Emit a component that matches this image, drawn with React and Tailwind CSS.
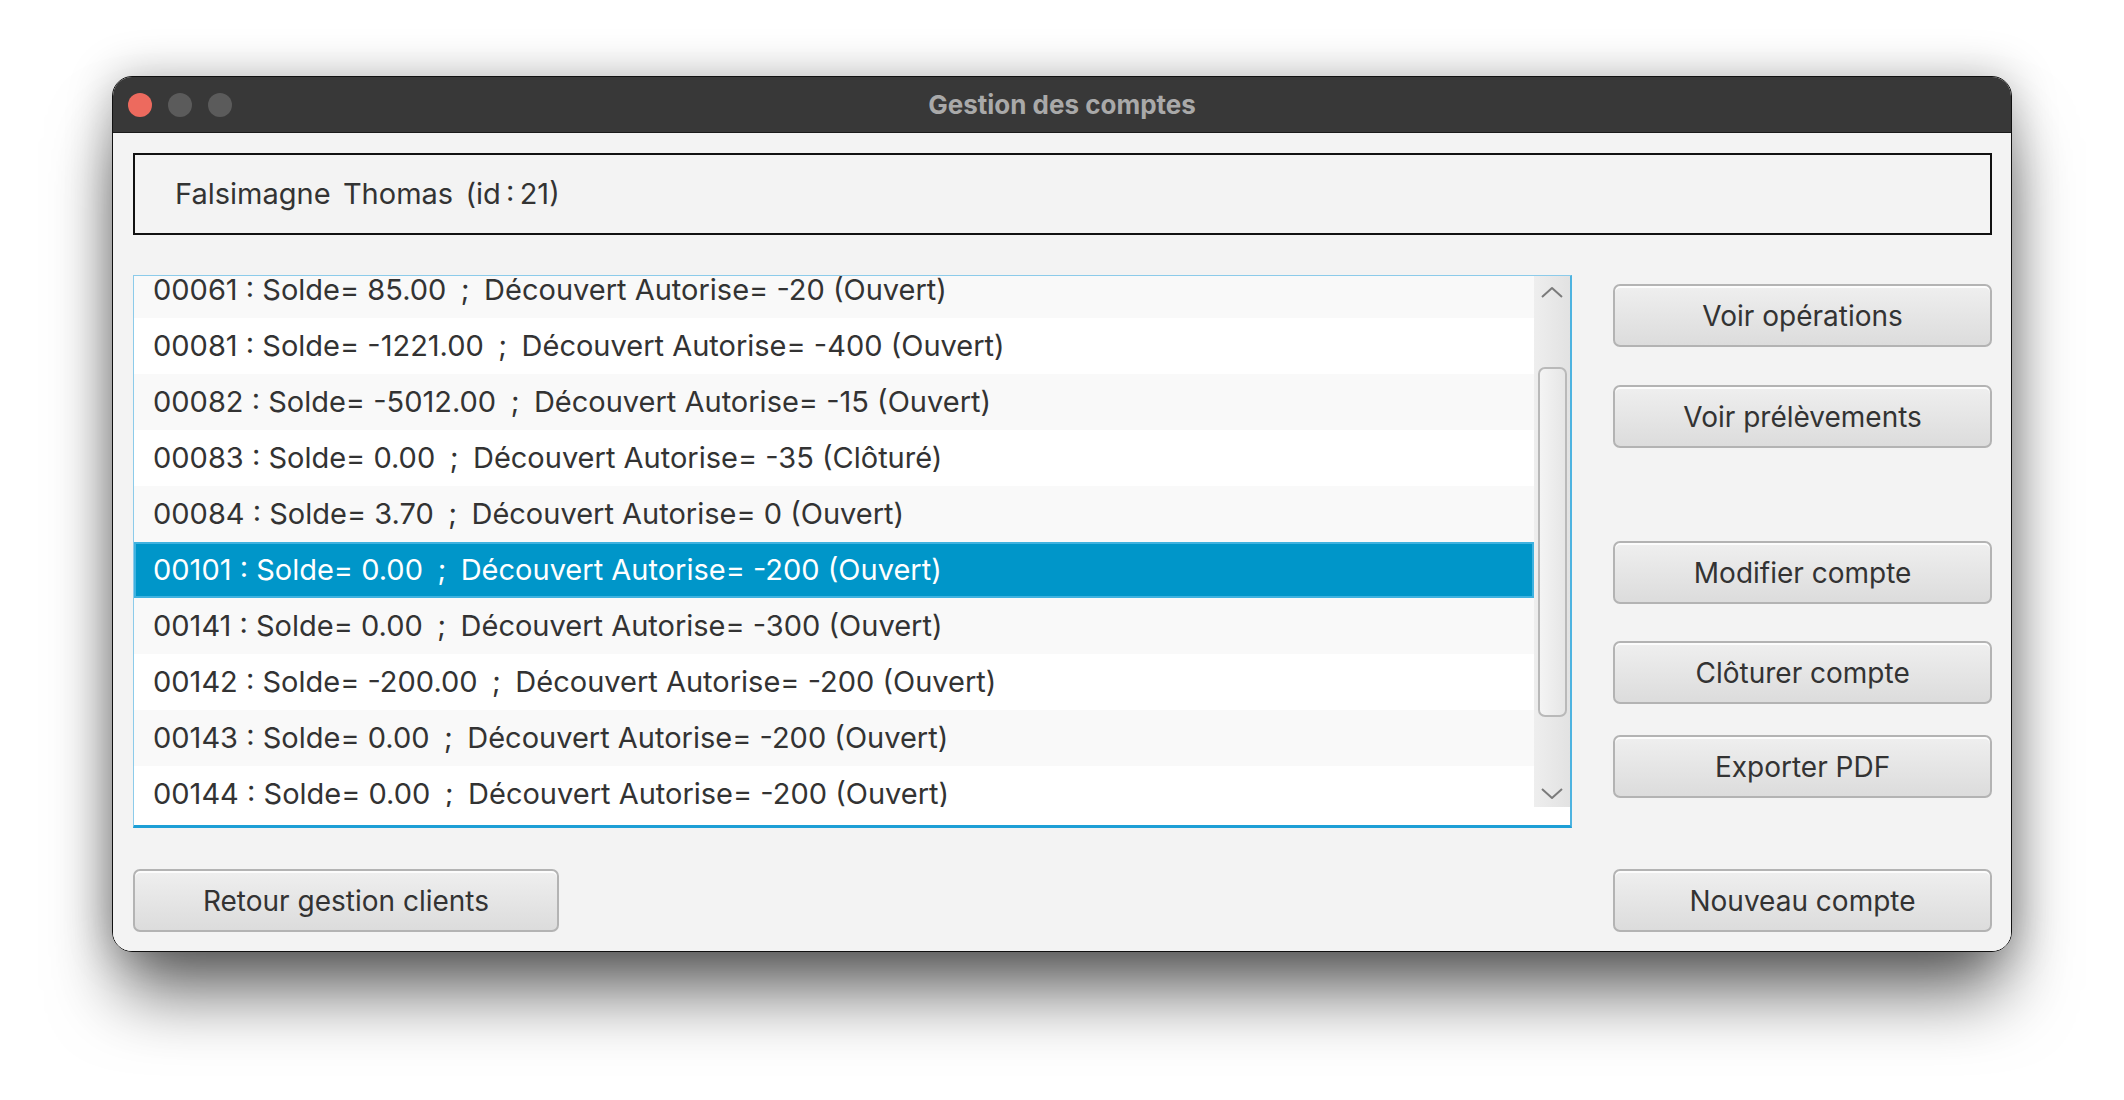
import React from 'react';

const comptes = [
  { id: '00061', solde: '85.00', decouvert: '-20', etat: 'Ouvert' },
  { id: '00081', solde: '-1221.00', decouvert: '-400', etat: 'Ouvert' },
  { id: '00082', solde: '-5012.00', decouvert: '-15', etat: 'Ouvert' },
  { id: '00083', solde: '0.00', decouvert: '-35', etat: 'Clôturé' },
  { id: '00084', solde: '3.70', decouvert: '0', etat: 'Ouvert' },
  { id: '00101', solde: '0.00', decouvert: '-200', etat: 'Ouvert' },
  { id: '00141', solde: '0.00', decouvert: '-300', etat: 'Ouvert' },
  { id: '00142', solde: '-200.00', decouvert: '-200', etat: 'Ouvert' },
  { id: '00143', solde: '0.00', decouvert: '-200', etat: 'Ouvert' },
  { id: '00144', solde: '0.00', decouvert: '-200', etat: 'Ouvert' },
];

const SELECTED = '00101';

const FxButton = ({ children, className = '' }) => (
  <button
    type="button"
    className={`h-[63px] rounded-[7px] border-2 border-[#b3b3b3] bg-gradient-to-b from-[#efefef] to-[#dcdcdc] shadow-[inset_0_2px_0_rgba(255,255,255,0.8)] text-[28px] text-[#333] ${className}`}
  >
    {children}
  </button>
);

const Chevron = ({ up }) => (
  <svg width="22" height="12" viewBox="0 0 22 12" fill="none">
    <polyline
      points={up ? '1,11 11,2 21,11' : '1,1 11,10 21,1'}
      stroke="#7b7b7b"
      strokeWidth="2"
      strokeLinejoin="round"
    />
  </svg>
);

const CompteRow = ({ compte, index }) => {
  const selected = compte.id === SELECTED;
  const bg = selected
    ? 'bg-[#0096c9] text-white border-2 border-[#3fb2e0]'
    : index % 2 === 0
      ? 'bg-[#f9f9f9] text-[#333] border-2 border-transparent'
      : 'bg-white text-[#333] border-2 border-transparent';
  return (
    <div className={`h-[56px] shrink-0 flex items-center pl-[17px] whitespace-pre text-[29px] ${bg}`}>
      {`${compte.id} : Solde= ${compte.solde}\u2002;\u2002Découvert Autorise= ${compte.decouvert} (${compte.etat})`}
    </div>
  );
};

export default function App() {
  return (
    <div
      className="w-full h-[1100px] bg-white overflow-hidden"
      style={{ fontFamily: 'Inter, "Noto Sans", sans-serif' }}
    >
      <div className="ml-[112px] mt-[76px] w-[1900px] h-[876px] rounded-[20px] overflow-hidden border border-[#111] flex flex-col shadow-[0_50px_70px_-10px_rgba(0,0,0,0.6),0_0_45px_rgba(0,0,0,0.28)]">
        {/* barre de titre */}
        <div className="h-[56px] shrink-0 bg-[#383838] border-b border-[#1a1a1a] flex items-center relative">
          <div className="flex items-center gap-[16px] pl-[15px]">
            <span className="w-[24px] h-[24px] rounded-full bg-[#ed6a5e]" />
            <span className="w-[24px] h-[24px] rounded-full bg-[#5b5b5b]" />
            <span className="w-[24px] h-[24px] rounded-full bg-[#5b5b5b]" />
          </div>
          <div className="absolute inset-0 flex items-center justify-center text-[26px] font-bold text-[#a9a9a9]">
            Gestion des comptes
          </div>
        </div>

        {/* contenu */}
        <div className="flex-1 bg-[#f3f3f3] pt-[20px] pl-[20px] pr-[19px] flex flex-col">
          <div className="h-[82px] border-2 border-[#111] flex items-center pl-[40px] text-[29px] text-[#333] whitespace-pre [word-spacing:-2px]">
            {'Falsimagne  Thomas  (id\u2009:\u200921)'}
          </div>

          <div className="mt-[40px] h-[553px] flex gap-[41px]">
            {/* liste */}
            <div className="w-[1440px] h-full flex flex-col bg-white border border-[#8ccbea] border-b-[3px] border-b-[#1d9fd6] border-r-2 border-r-[#4db3e0]">
              <div className="h-[531px] flex">
                <div className="flex-1 overflow-hidden">
                  <div className="-mt-[14px] flex flex-col">
                    {comptes.map((c, i) => (
                      <CompteRow key={c.id} compte={c} index={i} />
                    ))}
                  </div>
                </div>
                <div className="w-[36px] bg-gradient-to-r from-[#eeeeee] to-[#e2e2e2] flex flex-col items-center">
                  <div className="h-[32px] flex items-center justify-center">
                    <Chevron up />
                  </div>
                  <div className="mt-[59px] w-[29px] h-[350px] rounded-[7px] border-2 border-[#b9b9b9] bg-gradient-to-r from-[#f4f4f4] to-[#e6e6e6]" />
                  <div className="flex-1 flex items-end justify-center pb-[7px]">
                    <Chevron />
                  </div>
                </div>
              </div>
              <div className="flex-1 bg-white" />
            </div>

            {/* boutons */}
            <div className="w-[379px] flex flex-col">
              <FxButton className="mt-[9px]">Voir opérations</FxButton>
              <FxButton className="mt-[38px]">Voir prélèvements</FxButton>
              <FxButton className="mt-[93px]">Modifier compte</FxButton>
              <FxButton className="mt-[37px]">Clôturer compte</FxButton>
              <FxButton className="mt-[31px]">Exporter PDF</FxButton>
            </div>
          </div>

          <div className="mt-[41px] flex justify-between">
            <FxButton className="w-[426px]">Retour gestion clients</FxButton>
            <FxButton className="w-[379px]">Nouveau compte</FxButton>
          </div>
        </div>
      </div>
    </div>
  );
}
